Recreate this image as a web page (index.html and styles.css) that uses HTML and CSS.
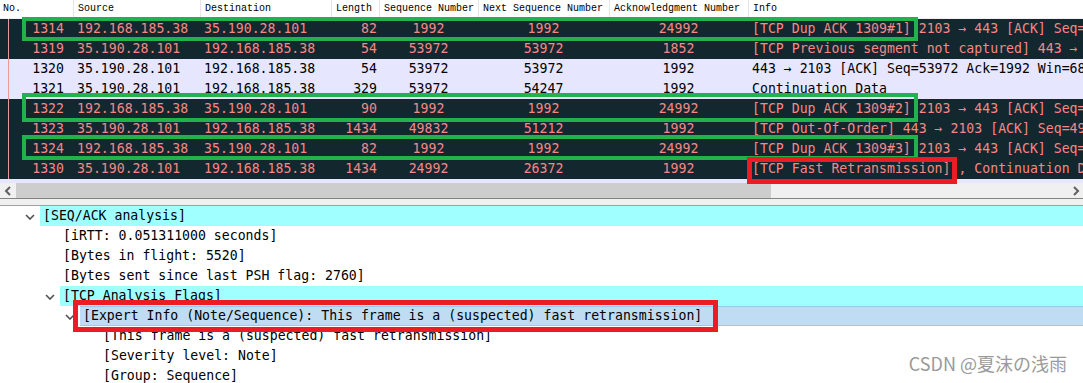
FILE: index.html
```html
<!DOCTYPE html>
<html lang="en">
<head>
<meta charset="UTF-8" />
<title>Wireshark - TCP Fast Retransmission</title>
<link rel="stylesheet" href="styles.css">
</head>
<body>

<div class="packets">
  <div class="row head">
    <div class="c">No.</div>
    <div class="c">Source</div>
    <div class="c">Destination</div>
    <div class="c">Length</div>
    <div class="c">Sequence Number</div>
    <div class="c">Next Sequence Number</div>
    <div class="c">Acknowledgment Number</div>
    <div class="c">Info</div>
  </div>

  <div class="row bad">
    <div class="c no">1314</div><div class="c">192.168.185.38</div><div class="c">35.190.28.101</div><div class="c len">82</div>
    <div class="c mid">1992</div><div class="c mid">1992</div><div class="c mid">24992</div>
    <div class="c info">[TCP Dup ACK 1309#1] 2103 → 443 [ACK] Seq=1992 Ack=24992 Win=66048 Len=0</div>
  </div>
  <div class="row bad">
    <div class="c no">1319</div><div class="c">35.190.28.101</div><div class="c">192.168.185.38</div><div class="c len">54</div>
    <div class="c mid">53972</div><div class="c mid">53972</div><div class="c mid">1852</div>
    <div class="c info">[TCP Previous segment not captured] 443 → 2103 [ACK] Seq=53972 Ack=1852</div>
  </div>
  <div class="row tcp">
    <div class="c no">1320</div><div class="c">35.190.28.101</div><div class="c">192.168.185.38</div><div class="c len">54</div>
    <div class="c mid">53972</div><div class="c mid">53972</div><div class="c mid">1992</div>
    <div class="c info">443 → 2103 [ACK] Seq=53972 Ack=1992 Win=68608 Len=0</div>
  </div>
  <div class="row tcp">
    <div class="c no">1321</div><div class="c">35.190.28.101</div><div class="c">192.168.185.38</div><div class="c len">329</div>
    <div class="c mid">53972</div><div class="c mid">54247</div><div class="c mid">1992</div>
    <div class="c info">Continuation Data</div>
  </div>
  <div class="row bad">
    <div class="c no">1322</div><div class="c">192.168.185.38</div><div class="c">35.190.28.101</div><div class="c len">90</div>
    <div class="c mid">1992</div><div class="c mid">1992</div><div class="c mid">24992</div>
    <div class="c info">[TCP Dup ACK 1309#2] 2103 → 443 [ACK] Seq=1992 Ack=24992 Win=66048 Len=0</div>
  </div>
  <div class="row bad">
    <div class="c no">1323</div><div class="c">35.190.28.101</div><div class="c">192.168.185.38</div><div class="c len">1434</div>
    <div class="c mid">49832</div><div class="c mid">51212</div><div class="c mid">1992</div>
    <div class="c info">[TCP Out-Of-Order] 443 → 2103 [ACK] Seq=49832 Ack=1992 Win=68608</div>
  </div>
  <div class="row bad">
    <div class="c no">1324</div><div class="c">192.168.185.38</div><div class="c">35.190.28.101</div><div class="c len">82</div>
    <div class="c mid">1992</div><div class="c mid">1992</div><div class="c mid">24992</div>
    <div class="c info">[TCP Dup ACK 1309#3] 2103 → 443 [ACK] Seq=1992 Ack=24992 Win=66048 Len=0</div>
  </div>
  <div class="row bad">
    <div class="c no">1330</div><div class="c">35.190.28.101</div><div class="c">192.168.185.38</div><div class="c len">1434</div>
    <div class="c mid">24992</div><div class="c mid">26372</div><div class="c mid">1992</div>
    <div class="c info">[TCP Fast Retransmission] , Continuation Data</div>
  </div>
  <div class="filler"></div>

  <!-- annotations -->
  <div class="mark green" style="left:22px;top:17px;width:896px;height:24px"></div>
  <div class="mark green" style="left:22px;top:93px;width:896px;height:29px"></div>
  <div class="mark green" style="left:22px;top:135px;width:896px;height:25px"></div>
  <div class="mark red" style="left:747px;top:157px;width:210px;height:27px"></div>
</div>

<div class="hscroll">
  <div class="arrow">
    <svg width="8" height="10" viewBox="0 0 8 10"><polyline points="6,1 2,5 6,9" fill="none" stroke="#606060" stroke-width="2"/></svg>
  </div>
  <div class="thumb"></div>
  <div class="track"></div>
  <div class="arrow">
    <svg width="8" height="10" viewBox="0 0 8 10"><polyline points="2,1 6,5 2,9" fill="none" stroke="#606060" stroke-width="2"/></svg>
  </div>
</div>

<div class="splitter"></div>

<div class="tree">
  <div class="node lv0"><span class="twisty"><svg width="10" height="6" viewBox="0 0 10 6"><polyline points="1,1 5,5 9,1" fill="none" stroke="#505050" stroke-width="1.6"/></svg></span><span class="label note">[SEQ/ACK analysis]</span></div>
  <div class="node lv1"><span class="twisty"></span><span class="label">[iRTT: 0.051311000 seconds]</span></div>
  <div class="node lv1"><span class="twisty"></span><span class="label">[Bytes in flight: 5520]</span></div>
  <div class="node lv1"><span class="twisty"></span><span class="label">[Bytes sent since last PSH flag: 2760]</span></div>
  <div class="node lv1"><span class="twisty"><svg width="10" height="6" viewBox="0 0 10 6"><polyline points="1,1 5,5 9,1" fill="none" stroke="#505050" stroke-width="1.6"/></svg></span><span class="label note">[TCP Analysis Flags]</span></div>
  <div class="node lv2"><span class="twisty"><svg width="10" height="6" viewBox="0 0 10 6"><polyline points="1,1 5,5 9,1" fill="none" stroke="#505050" stroke-width="1.6"/></svg></span><span class="label selected">[Expert Info (Note/Sequence): This frame is a (suspected) fast retransmission]</span></div>
  <div class="node lv3"><span class="twisty"></span><span class="label">[This frame is a (suspected) fast retransmission]</span></div>
  <div class="node lv3"><span class="twisty"></span><span class="label">[Severity level: Note]</span></div>
  <div class="node lv3"><span class="twisty"></span><span class="label">[Group: Sequence]</span></div>

  <div class="mark red" style="left:73px;top:94px;width:645px;height:32px"></div>
</div>

<div class="watermark">CSDN @夏沫の浅雨</div>

</body>
</html>
```

FILE: styles.css
```css
/* Reset */
* {
  margin: 0; padding: 0; box-sizing: border-box;
}
body {
  width: 1083px;
  height: 383px;
  overflow: hidden;
  background: #fff;
  font-family: "DejaVu Sans Mono", "Liberation Mono", monospace;
  font-size: 13.2px;
  color: #000;
  position: relative;
}

/* Packet list */
.packets {
  position: relative;
  background: #e7e6ff;
}
.packets::before {
  content: "";
  position: absolute;
  left: 8px;
  top: 19px;
  width: 1px;
  height: 160px;
  background: #e89a9a;
  z-index: 1;
}
.row {
  display: grid;
  grid-template-columns: 73px 127px 131px 48px 99px 131px 139px 1fr;
  height: 20px;
  line-height: 20px;
  white-space: nowrap;
}
.c {
  padding: 0 4px;
  overflow: hidden;
}
.head {
  height: 19px;
  line-height: 18px;
  background: #fff;
  border-bottom: 1px solid #f0f0f0;
  font-family: "Liberation Mono", monospace;
  font-size: 10px;
  color: #000;
}
.head .c {
  border-left: 1px solid #e5e5e5;
  padding-left: 4px;
}
.head .c:first-child {
  border-left: none;
  padding-left: 3px;
}
.bad {
  background: #12272e;
  color: #f78787;
}
.tcp {
  background: #e7e6ff;
  color: #000;
}
.no {
  text-align: right;
  padding-right: 9px;
}
.len {
  text-align: right;
  padding-right: 2px;
}
.mid {
  text-align: center;
}
.info {
  padding-left: 4px;
}
.filler {
  height: 4px;
}

/* annotation boxes */
.mark {
  position: absolute;
  border: 4px solid;
  z-index: 2;
}
.mark.green { border-color: #22b14c; }
.mark.red { border-color: #ec1c24; border-width: 5px; }

/* Horizontal scrollbar */
.hscroll {
  display: flex;
  height: 15px;
  background: #f0f0f0;
}
.arrow {
  width: 16px;
  display: flex;
  align-items: center;
  justify-content: center;
}
.arrow:last-child {
  width: 14px;
}
.thumb {
  width: 755px;
  background: #cdcdcd;
}
.track {
  flex: 1;
}

.splitter {
  height: 8px;
  background: #f0f0f0;
  border-top: 1px solid #828282;
  border-bottom: 1px solid #a0a0a0;
}

/* Packet details tree */
.tree {
  position: relative;
}
.node {
  display: flex;
  height: 20px;
  line-height: 20px;
  white-space: nowrap;
}
.lv0 { padding-left: 20px; }
.lv1 { padding-left: 40px; }
.lv2 { padding-left: 60px; }
.lv3 { padding-left: 80px; }
.twisty {
  width: 20px;
  display: flex;
  align-items: center;
  justify-content: center;
  padding-top: 1px;
}
.label {
  flex: 1;
  padding-left: 3px;
}
.label.note {
  background: #a0ffff;
}
.label.selected {
  background: #c0dcf3;
  border-top: 1px solid #99c9ef;
  border-bottom: 1px solid #99c9ef;
  line-height: 18px;
}

.watermark {
  position: absolute;
  right: 16px;
  bottom: 7px;
  font-family: "Noto Sans CJK SC", "Noto Sans", sans-serif;
  font-size: 18px;
  color: #9a9a9a;
  text-shadow: 0 0 1px #fff, 0 0 2px #fff;
}
```
